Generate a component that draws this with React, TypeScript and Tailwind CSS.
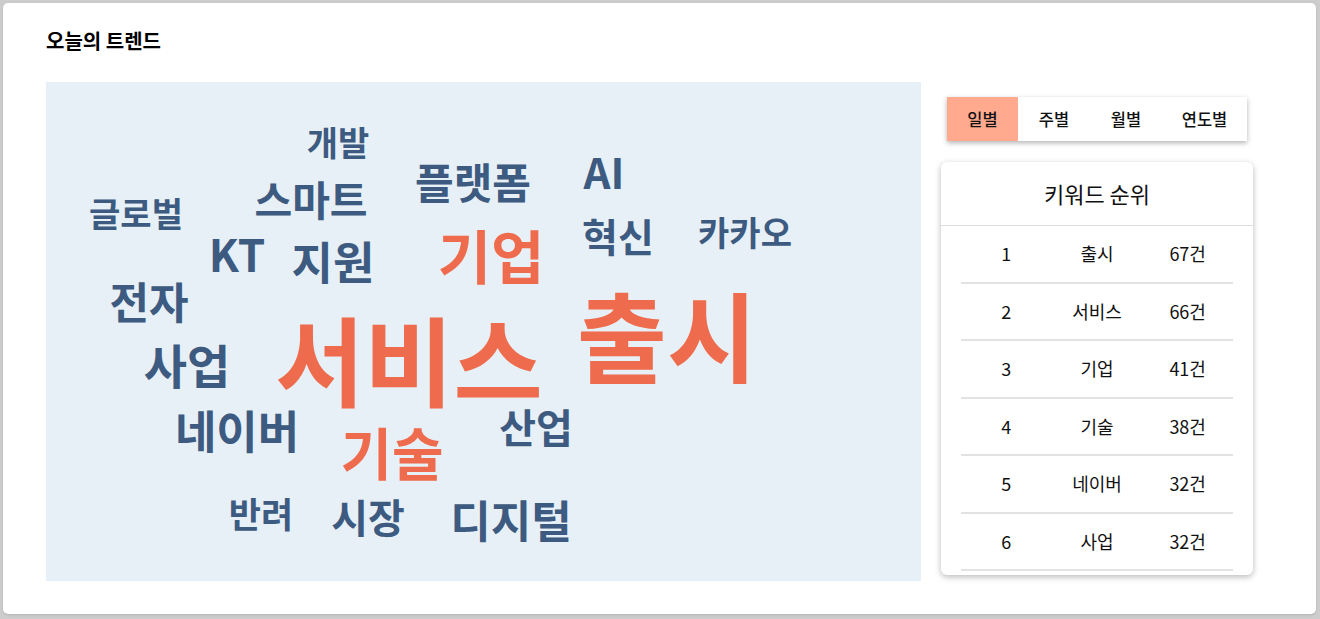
import React from "react";

type Word = { text: string; cls: string };

// word cloud, positions are the word centres inside the canvas
const words: Word[] = [
  { text: "개발", cls: "left-[292px] top-[60px] text-[34px] text-[#3d5a80]" },
  { text: "플랫폼", cls: "left-[427px] top-[99px] text-[42px] text-[#3d5a80]" },
  { text: "AI", cls: "left-[558px] top-[89px] text-[42px] text-[#3d5a80]" },
  { text: "글로벌", cls: "left-[90px] top-[131px] text-[34px] text-[#3d5a80]" },
  { text: "스마트", cls: "left-[265px] top-[116px] text-[41px] text-[#3d5a80]" },
  { text: "카카오", cls: "left-[699px] top-[150px] text-[34px] text-[#3d5a80]" },
  { text: "혁신", cls: "left-[572px] top-[153px] text-[39px] text-[#3d5a80]" },
  { text: "기업", cls: "left-[445px] top-[172px] text-[58px] text-[#ee6c4d]" },
  { text: "KT", cls: "left-[191px] top-[171px] text-[44px] text-[#3d5a80]" },
  { text: "지원", cls: "left-[287px] top-[178px] text-[45px] text-[#3d5a80]" },
  { text: "전자", cls: "left-[103px] top-[218px] text-[43px] text-[#3d5a80]" },
  { text: "출시", cls: "left-[621px] top-[250px] text-[98px] text-[#ee6c4d]" },
  { text: "서비스", cls: "left-[363px] top-[274px] text-[97px] text-[#ee6c4d]" },
  { text: "사업", cls: "left-[141px] top-[281px] text-[47px] text-[#3d5a80]" },
  { text: "네이버", cls: "left-[191px] top-[347px] text-[45px] text-[#3d5a80]" },
  { text: "기술", cls: "left-[346px] top-[369px] text-[56px] text-[#ee6c4d]" },
  { text: "산업", cls: "left-[490px] top-[344px] text-[40px] text-[#3d5a80]" },
  { text: "반려", cls: "left-[215px] top-[430px] text-[35px] text-[#3d5a80]" },
  { text: "시장", cls: "left-[322px] top-[434px] text-[40px] text-[#3d5a80]" },
  { text: "디지털", cls: "left-[465px] top-[437px] text-[44px] text-[#3d5a80]" },
];

const ranks = [
  { no: 1, word: "출시", count: "67건" },
  { no: 2, word: "서비스", count: "66건" },
  { no: 3, word: "기업", count: "41건" },
  { no: 4, word: "기술", count: "38건" },
  { no: 5, word: "네이버", count: "32건" },
  { no: 6, word: "사업", count: "32건" },
];

const tabs = [
  { label: "일별", w: "w-[71px]" },
  { label: "주별", w: "w-[72px]" },
  { label: "월별", w: "w-[72px]" },
  { label: "연도별", w: "flex-1" },
];

export default function App() {
  return (
    <div className="h-[619px] w-[1320px] bg-[#cdcdcd] pt-[3px] pl-[3px] pr-[4px] pb-[5px] font-['Noto_Sans_CJK_KR','Noto_Sans',sans-serif] text-[#111]">
      <div className="h-full rounded-[5px] bg-white shadow-sm pl-[43px] pt-[24px]">
        <h2 className="text-[20px] font-bold leading-[28px] text-black">
          오늘의 트렌드
        </h2>
        <div className="mt-[27px] flex gap-[20px]">
          <div className="relative h-[499px] w-[875px] bg-[#e7f0f6] overflow-hidden">
            {words.map((w) => (
              <span
                key={w.text}
                className={`absolute -translate-x-1/2 -translate-y-1/2 whitespace-nowrap font-bold leading-none ${w.cls}`}
              >
                {w.text}
              </span>
            ))}
          </div>

          <div className="w-[312px] pt-[15px]">
            <div className="mx-[6px] flex h-[44px] bg-white shadow-[0_2px_5px_rgba(0,0,0,0.3)]">
              {tabs.map((t, i) => (
                <button
                  key={t.label}
                  className={`${t.w} text-[16.5px] font-medium ${
                    i === 0 ? "bg-[#ffaa8f]" : "bg-white"
                  }`}
                >
                  {t.label}
                </button>
              ))}
            </div>

            <div className="mt-[21px] rounded-[6px] bg-white pb-[4px] shadow-[0_2px_6px_rgba(0,0,0,0.28)]">
              <div className="flex h-[64px] items-center justify-center border-b border-[#dcdcdc] text-[22px]">
                키워드 순위
              </div>
              <div className="px-[20px]">
                {ranks.map((r) => (
                  <div
                    key={r.no}
                    className="grid h-[57.5px] grid-cols-3 items-center border-b-2 border-[#e2e2e2] text-center text-[18px]"
                  >
                    <span>{r.no}</span>
                    <span>{r.word}</span>
                    <span>{r.count}</span>
                  </div>
                ))}
              </div>
            </div>
          </div>
        </div>
      </div>
    </div>
  );
}
